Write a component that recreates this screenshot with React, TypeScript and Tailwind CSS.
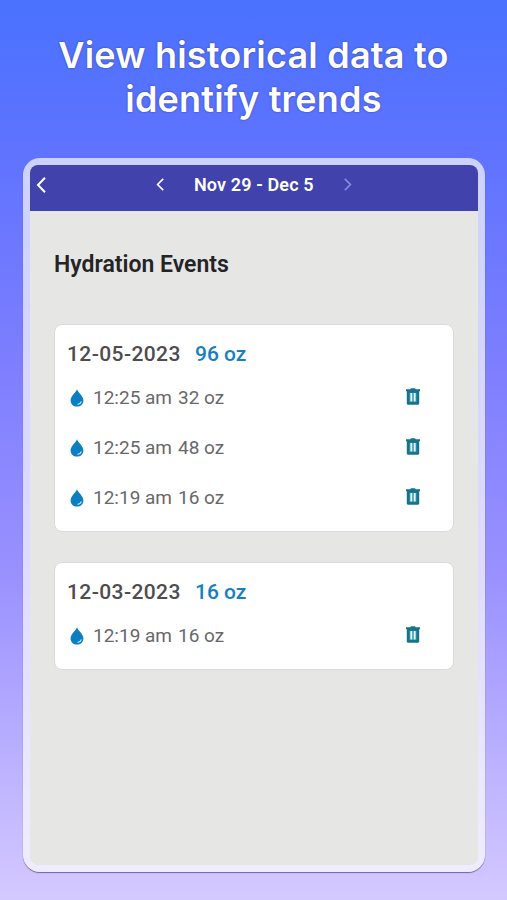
import React from "react";

type HydrationEvent = {
	time: string;
	amount: string;
};

type HydrationDay = {
	date: string;
	total: string;
	events: HydrationEvent[];
};

const days: HydrationDay[] = [
	{
		date: "12-05-2023",
		total: "96 oz",
		events: [
			{ time: "12:25 am", amount: "32 oz" },
			{ time: "12:25 am", amount: "48 oz" },
			{ time: "12:19 am", amount: "16 oz" },
		],
	},
	{
		date: "12-03-2023",
		total: "16 oz",
		events: [{ time: "12:19 am", amount: "16 oz" }],
	},
];

function Chevron({ className, d }: { className: string; d: string }) {
	return (
		<svg
			viewBox="0 0 10 16"
			fill="none"
			stroke="currentColor"
			strokeWidth="2"
			className={className}
		>
			<path d={d} />
		</svg>
	);
}

function DropIcon() {
	return (
		<svg viewBox="0 0 14 18" className="h-[18px] w-[14px] shrink-0">
			<path
				d="M7 .3C7.9 3.3 13.4 7.2 13.4 11.5C13.4 15.2 10.6 17.6 7 17.6S.6 15.2 .6 11.5C.6 7.2 6.1 3.3 7 .3Z"
				fill="#0b7fc2"
			/>
			<path
				d="M7.8 15.3C9.5 15.2 10.8 14.2 11.2 12.7"
				fill="none"
				stroke="#c2e2f4"
				strokeWidth="1.1"
				strokeLinecap="round"
			/>
		</svg>
	);
}

function TrashIcon() {
	return (
		<svg viewBox="0 0 14 17" className="h-[17px] w-[14px] shrink-0">
			<path d="M0 1.2H4.2L5 .3H9L9.8 1.2H14V3.2H0Z" fill="#17728c" />
			<path
				d="M.8 3H13.2V15.2Q13.2 16.7 11.7 16.7H2.3Q.8 16.7 .8 15.2Z"
				fill="#17728c"
			/>
			<path d="M3.4 4.8H10.6V13.8H3.4Z" fill="#3d9aae" />
			<path d="M4.4 5H6.2V13.4H4.4ZM7.8 5H9.6V13.4H7.8Z" fill="#e8f7f9" />
		</svg>
	);
}

function DayCard({ day }: { day: HydrationDay }) {
	return (
		<div className="rounded-[8px] border border-[#dadadc] bg-white pl-3 pr-[33px] pt-[14px] pb-[10px]">
			<div className="flex h-[32px] items-center text-[21px] font-medium">
				<h3 className="w-[128px] whitespace-nowrap tracking-[0.4px] text-[#4d4d4f]">
					{day.date}
				</h3>
				<span className="whitespace-nowrap text-[#1580bf]">{day.total}</span>
			</div>
			<ul>
				{day.events.map((event, i) => (
					<li
						key={i}
						className="flex h-[50px] items-center text-[19px] text-[#68686a]"
					>
						<span className="flex w-[26px] pl-[3px] pt-[3px]">
							<DropIcon />
						</span>
						<span className="w-[85px] whitespace-nowrap pt-[4px]">
							{event.time}
						</span>
						<span className="flex-1 pt-[4px]">{event.amount}</span>
						<TrashIcon />
					</li>
				))}
			</ul>
		</div>
	);
}

function App() {
	return (
		<div className="flex h-[900px] w-[507px] flex-col overflow-hidden bg-[linear-gradient(180deg,#4972ff_0%,#5f73ff_17%,#7d7eff_40%,#9a91ff_64%,#d4c9ff_100%)] font-['Roboto',sans-serif]">
			<h1 className="h-[158px] pt-[33px] text-center font-['Inter',sans-serif] text-[36px] font-semibold leading-[44px] tracking-[0.2px] text-white [text-shadow:0_0_2px_rgba(50,40,110,0.8)]">
				View historical data to
				<br />
				identify trends
			</h1>
			<div className="ml-[23px] h-[714px] w-[462px] rounded-[17px] bg-white/68 p-[7px] shadow-[0_1px_1px_rgba(70,60,120,0.7)]">
				<div className="flex h-[700px] flex-col overflow-hidden rounded-[8px] bg-[#e6e6e4]">
					<div className="flex h-[46px] shrink-0 items-center bg-[#4142ab] pb-[7px] text-white">
						<Chevron className="ml-[6px] h-[16px] w-[10px]" d="M9 .8L2 8L9 15.2" />
						<Chevron className="ml-[110px] h-[13px] w-[8px]" d="M9 1L2 8L9 15" />
						<span className="ml-[30px] w-[150px] whitespace-nowrap text-[18px] font-semibold tracking-[0.12px]">
							Nov 29 - Dec 5
						</span>
						<Chevron
							className="h-[13px] w-[8px] text-[#8b8be0]"
							d="M1 1L8 8L1 15"
						/>
					</div>
					<div className="px-[24px] pt-[37px]">
						<h2 className="mb-[42px] text-[23px] font-semibold leading-[34px] text-[#242426]">
							Hydration Events
						</h2>
						<div className="flex flex-col gap-[30px]">
							{days.map((day) => (
								<DayCard key={day.date} day={day} />
							))}
						</div>
					</div>
				</div>
			</div>
		</div>
	);
}

export default App;
